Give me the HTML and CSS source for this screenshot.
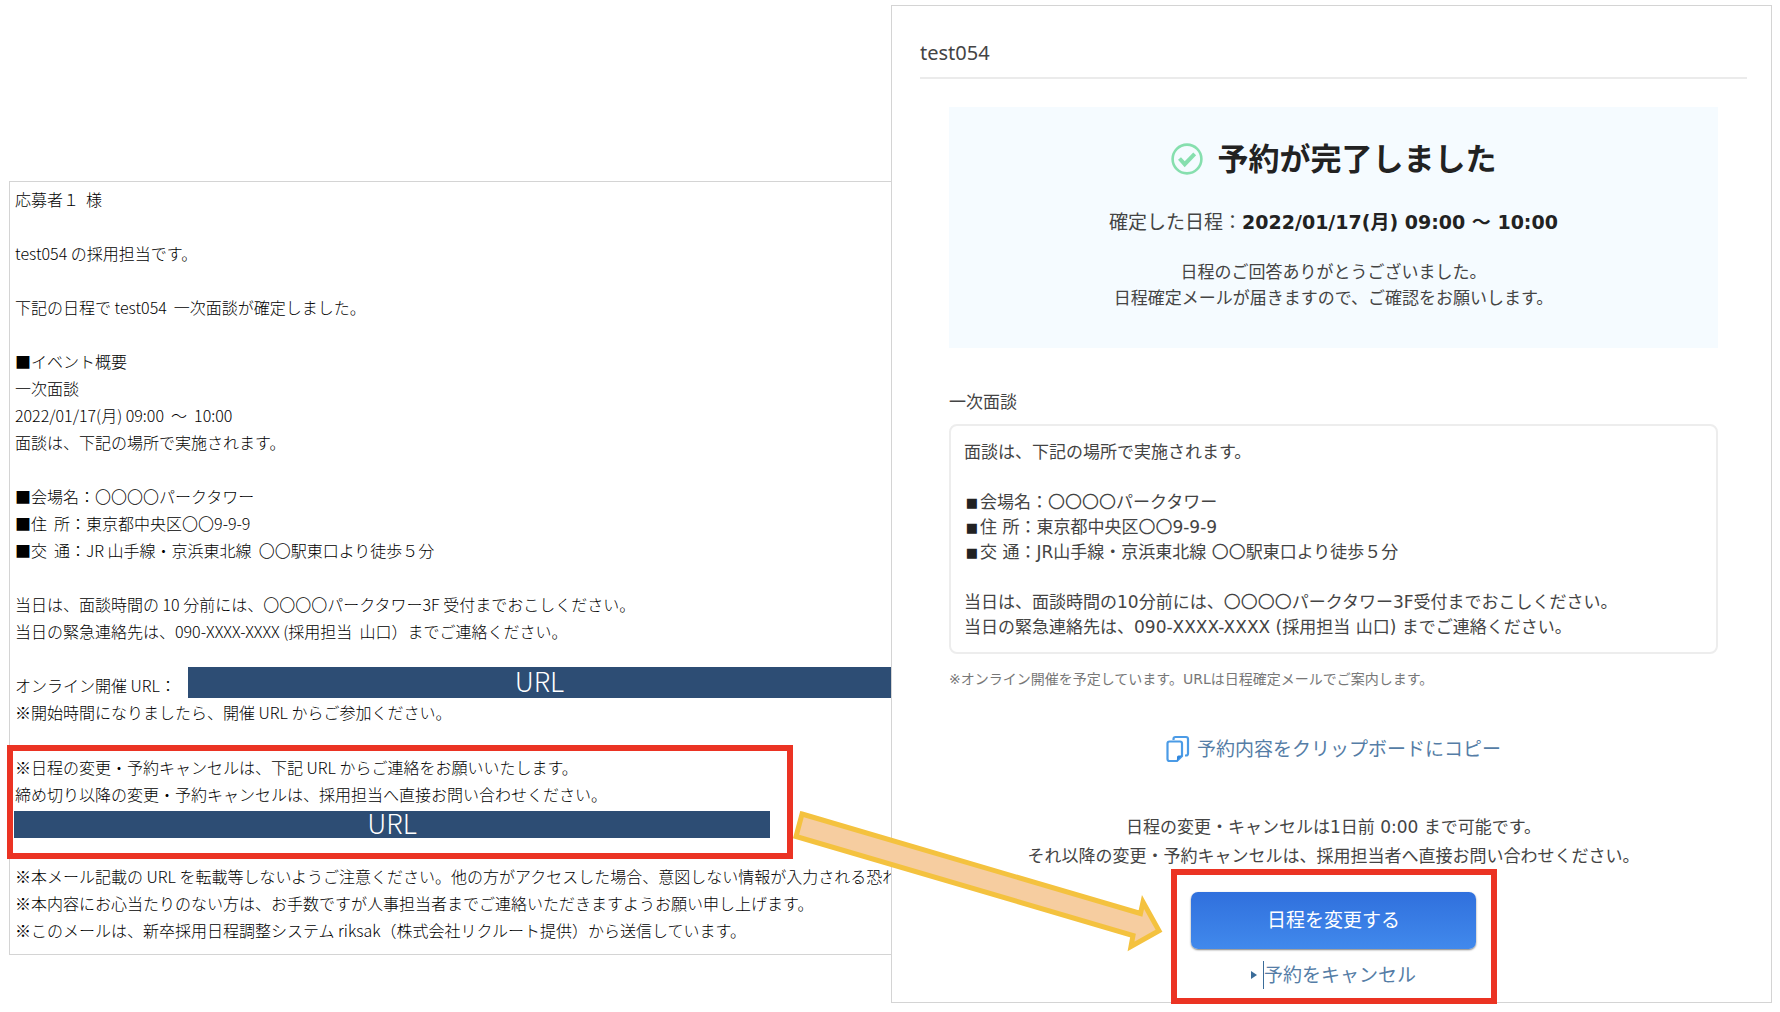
FILE: index.html
```
<!DOCTYPE html>
<html lang="ja">
<head>
<meta charset="utf-8">
<meta name="viewport" content="width=device-width, initial-scale=1">
<title>予約が完了しました</title>
<link rel="stylesheet" href="styles.css">
</head>
<body>
<main class="page">
  <article class="mail">
    <p>応募者１  様</p>
    <p>test054 の採用担当です。</p>
    <p>下記の日程で test054  一次面談が確定しました。</p>
    <p>■イベント概要
一次面談
2022/01/17(月) 09:00  ～  10:00
面談は、下記の場所で実施されます。</p>
    <p>■会場名：〇〇〇〇パークタワー
■住  所：東京都中央区〇〇9-9-9
■交  通：JR 山手線・京浜東北線  〇〇駅東口より徒歩５分</p>
    <p>当日は、面談時間の 10 分前には、〇〇〇〇パークタワー3F 受付までおこしください。
当日の緊急連絡先は、090-XXXX-XXXX (採用担当  山口）までご連絡ください。</p>
    <div>
      <div class="mail-url"><span>オンライン開催 URL：</span><span class="mask mask-inline">URL</span></div>
      <p>※開始時間になりましたら、開催 URL からご参加ください。</p>
    </div>
    <section class="mail-change">
      <p>※日程の変更・予約キャンセルは、下記 URL からご連絡をお願いいたします。
締め切り以降の変更・予約キャンセルは、採用担当へ直接お問い合わせください。</p>
      <div class="mask mask-row">URL</div>
    </section>
    <p>※本メール記載の URL を転載等しないようご注意ください。他の方がアクセスした場合、意図しない情報が入力される恐れが
※本内容にお心当たりのない方は、お手数ですが人事担当者までご連絡いただきますようお願い申し上げます。
※このメールは、新卒採用日程調整システム riksak（株式会社リクルート提供）から送信しています。</p>
  </article>

  <section class="panel">
    <header class="panel-header">test054</header>
    <div class="panel-body">
      <div class="result">
        <h1 class="result-title">
          <svg class="check" viewBox="0 0 32 32" aria-hidden="true"><circle cx="16" cy="16" r="14.4"/><path class="tick" d="M8.5 15.5l5.2 5.7 10-10.4"/></svg>
          <span>予約が完了しました</span>
        </h1>
        <p class="result-date">確定した日程：<strong>2022/01/17(月) 09:00 ～ 10:00</strong></p>
        <p class="result-text">日程のご回答ありがとうございました。<br>日程確定メールが届きますので、ご確認をお願いします。</p>
      </div>

      <h2 class="event-title">一次面談</h2>
      <p class="event-box">面談は、下記の場所で実施されます。

<span class="square">■</span>会場名：〇〇〇〇パークタワー
<span class="square">■</span>住 所：東京都中央区〇〇9-9-9
<span class="square">■</span>交 通：JR山手線・京浜東北線 〇〇駅東口より徒歩５分

当日は、面談時間の10分前には、〇〇〇〇パークタワー3F受付までおこしください。
当日の緊急連絡先は、090-XXXX-XXXX (採用担当 山口) までご連絡ください。</p>
      <p class="event-note">※オンライン開催を予定しています。URLは日程確定メールでご案内します。</p>

      <a class="copy" href="#copy">
        <svg class="copy-icon" viewBox="0 0 24 28" aria-hidden="true">
          <path d="M7.5 5V4q0-2 2-2H20q2 0 2 2v14.500q0 2-2 2h-1"/>
          <path d="M3.500 6.500H14q2 0 2 2V21l-5 5H3.500q-2 0-2-2V8.500q0-2 2-2z"/>
          <path class="fold" d="M16 20.500h-3.500q-1.500 0-1.500 1.500v4z"/>
        </svg>
        <span>予約内容をクリップボードにコピー</span>
      </a>

      <p class="limit">日程の変更・キャンセルは1日前 0:00 まで可能です。<br>それ以降の変更・予約キャンセルは、採用担当者へ直接お問い合わせください。</p>

      <div class="actions">
        <button class="change" type="button">日程を変更する</button>
        <a class="cancel" href="#cancel"><span>予約をキャンセル</span></a>
      </div>
    </div>
    <svg class="arrow" viewBox="0 0 380 150" aria-hidden="true"><path d="M15 9L353.500 108.500 356 97 372 125.700 344 141.500 346 130.500 9 31.500z"/></svg>
  </section>
</main>
</body>
</html>
```
FILE: styles.css
```
* {
  box-sizing: border-box;
}

body {
  margin: 0;
  background: #fff;
}

p, h1, h2 {
  margin: 0;
  font-weight: inherit;
}

a {
  color: #557da6;
  text-decoration: none;
}

.page {
  display: grid;
  grid-template-columns: minmax(0, 882fr) minmax(0, 881fr);
  align-items: start;
  padding: 5px 8px 7px 9px;
}

/* Notification mail */
.mail {
  display: grid;
  grid-template-columns: minmax(0, 1fr);
  gap: 27px;
  margin-top: 176px;
  padding: 4px 0 10px 5px;
  border: 1px solid #d4d4d4;
  border-right: 0;
  font: 300 16px/27px "Noto Sans CJK JP", sans-serif;
  color: #000;
}

.mail p {
  white-space: pre;
}

.mail-url {
  display: flex;
  gap: 12px;
}

.mask {
  background: #2d4d74;
  color: #fff;
  font-size: 27px;
  text-align: center;
}

.mask-inline {
  flex: 1;
  margin: -5px 0 1px;
  padding-bottom: 4px;
  line-height: 27px;
}

.mail-change {
  position: relative;
  margin: 1px 0;
}

.mail-change::after {
  content: "";
  position: absolute;
  inset: -9px 98px -24px -8px;
  border: 6px solid #eb3323;
}

.mask-row {
  margin: 3px 121px -3px -1px;
  padding-bottom: 4px;
  line-height: 23px;
}

/* Reservation result */
.panel {
  position: relative;
  border: 1px solid #d4d4d4;
  background: #fff;
  font: 17px/25px "DejaVu Sans", "Noto Sans CJK JP", sans-serif;
  color: #444;
}

.panel-header {
  margin: 0 24px 0 28px;
  padding: 33px 0 10px;
  border-bottom: 2px solid #ebebeb;
  font: 20px/28px "Noto Sans", sans-serif;
}

.panel-body {
  display: flex;
  flex-direction: column;
  padding: 28px 53px 0 57px;
}

.result {
  padding: 29px 0 37px;
  background: #f5fbff;
  text-align: center;
}

.result-title {
  display: flex;
  justify-content: center;
  align-items: center;
  gap: 15px;
  font-size: 31px;
  font-weight: 700;
  line-height: 46px;
  color: #222;
}

.check {
  width: 32px;
  height: 32px;
  fill: none;
  stroke: #86dfae;
  stroke-width: 2.600;
}

.check .tick {
  stroke-width: 4;
}

.result-date {
  margin-top: 26px;
  font-size: 19px;
  line-height: 28px;
}

.result-date strong {
  color: #222;
}

.result-text {
  margin-top: 23px;
  line-height: 26px;
}

.event-title {
  margin-top: 41px;
  font-size: 17px;
  line-height: 26px;
}

.event-box {
  margin-top: 9px;
  padding: 14px 13px 12px;
  border: 2px solid #ededed;
  border-radius: 8px;
  white-space: pre-wrap;
}

.square {
  display: inline-block;
  width: 16px;
  font-size: 13px;
  line-height: 13px;
  vertical-align: 1px;
  text-align: center;
  color: #222;
}

.event-note {
  margin-top: 15px;
  font-size: 14px;
  line-height: 20px;
  color: #777;
}

.copy {
  display: flex;
  align-items: center;
  align-self: center;
  gap: 7px;
  margin-top: 46px;
  font-size: 19px;
  line-height: 28px;
}

.copy-icon {
  width: 24px;
  height: 28px;
  fill: none;
  stroke: #4b9be6;
  stroke-width: 2.200;
}

.copy-icon .fold {
  fill: #2f87de;
  stroke: none;
}

.limit {
  margin-top: 50px;
  line-height: 29px;
  text-align: center;
}

.actions {
  display: flex;
  flex-direction: column;
  align-items: center;
  align-self: center;
  width: 326px;
  margin: -2px 0;
  padding: 17px 13px 9px;
  border: 6px solid #eb3323;
  background: #fff;
  z-index: 1;
}

.change {
  width: 285px;
  height: 57px;
  border: 0;
  border-radius: 7px;
  background: linear-gradient(#3070dd, #4189ec);
  box-shadow: 0 1px 2px rgba(0, 0, 0, 0.5);
  color: #fff;
  font: inherit;
  font-size: 19px;
}

.cancel {
  display: flex;
  align-items: center;
  gap: 6px;
  margin-top: 12px;
  font-size: 19px;
  line-height: 28px;
}

.cancel::before {
  content: "";
  border: solid transparent;
  border-width: 4px 0 4px 6px;
  border-left-color: #3b6c99;
}

.cancel span {
  border-left: 1px solid #3b6c99;
}

.arrow {
  position: absolute;
  top: 799px;
  left: -105px;
  width: 380px;
  height: 150px;
  fill: #f6cda0;
  stroke: #f4c23f;
  stroke-width: 5;
}
```
